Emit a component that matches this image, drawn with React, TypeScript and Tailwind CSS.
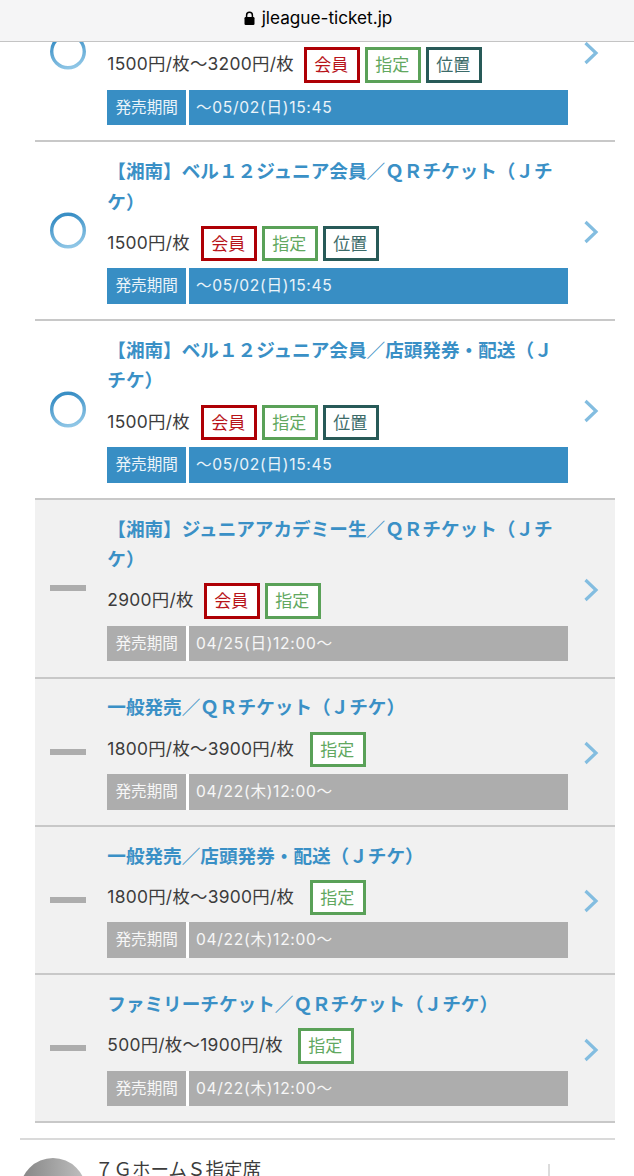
import clsx from "clsx";

interface Ticket {
    title?: string;
    price: string;
    priceWidth: string;
    tags: string[];
    period: string;
    onSale: boolean;
}

const tickets: Ticket[] = [
    {
        price: "1500円/枚〜3200円/枚",
        priceWidth: "w-[197px]",
        tags: ["会員", "指定", "位置"],
        period: "〜05/02(日)15:45",
        onSale: true,
    },
    {
        title: "【湘南】ベル１２ジュニア会員／ＱＲチケット（Ｊチケ）",
        price: "1500円/枚",
        priceWidth: "w-[94px]",
        tags: ["会員", "指定", "位置"],
        period: "〜05/02(日)15:45",
        onSale: true,
    },
    {
        title: "【湘南】ベル１２ジュニア会員／店頭発券・配送（Ｊチケ）",
        price: "1500円/枚",
        priceWidth: "w-[94px]",
        tags: ["会員", "指定", "位置"],
        period: "〜05/02(日)15:45",
        onSale: true,
    },
    {
        title: "【湘南】ジュニアアカデミー生／ＱＲチケット（Ｊチケ）",
        price: "2900円/枚",
        priceWidth: "w-[97px]",
        tags: ["会員", "指定"],
        period: "04/25(日)12:00〜",
        onSale: false,
    },
    {
        title: "一般発売／ＱＲチケット（Ｊチケ）",
        price: "1800円/枚〜3900円/枚",
        priceWidth: "w-[203px]",
        tags: ["指定"],
        period: "04/22(木)12:00〜",
        onSale: false,
    },
    {
        title: "一般発売／店頭発券・配送（Ｊチケ）",
        price: "1800円/枚〜3900円/枚",
        priceWidth: "w-[203px]",
        tags: ["指定"],
        period: "04/22(木)12:00〜",
        onSale: false,
    },
    {
        title: "ファミリーチケット／ＱＲチケット（Ｊチケ）",
        price: "500円/枚〜1900円/枚",
        priceWidth: "w-[191px]",
        tags: ["指定"],
        period: "04/22(木)12:00〜",
        onSale: false,
    },
];

const tagColors: Record<string, string> = {
    会員: "border-[#ae0005] text-[#b8141a]",
    指定: "border-[#5aa158] text-[#62a860]",
    位置: "border-[#285a58] text-[#3c6b69]",
};

const StatusIcon = ({ onSale }: { onSale: boolean }) => {
    if (!onSale) {
        return <div className="w-9 h-1.5 bg-[#adadad]"></div>;
    }

    return (
        <svg width="36" height="37" viewBox="0 0 36 37" fill="none">
            <defs>
                <linearGradient id="ring" x1="0.3" y1="0" x2="0.6" y2="1">
                    <stop offset="0.1" stopColor="#3a8fc5" />
                    <stop offset="1" stopColor="#8fc6e6" />
                </linearGradient>
            </defs>
            <circle cx="18" cy="18.5" r="16.3" stroke="url(#ring)" strokeWidth="3.4" />
        </svg>
    );
};

const TicketRow = ({ title, price, priceWidth, tags, period, onSale }: Ticket) => {
    const barColor = onSale ? "bg-[#388ec4]" : "bg-[#adadad]";

    return (
        <li className={clsx(
            "flex items-center border-t-2 border-[#c8c8c8] pl-[15px]",
            !onSale && "bg-[#f1f1f1]",
            !title && "h-[178.8px] -mt-[80.5px]",
        )}>
            <StatusIcon onSale={onSale} />

            <div className={clsx("w-[461px] ml-[21.3px] pt-[13.8px] pb-[15.2px]", !title && "self-end")}>
                {title && (
                    <h3 className="text-[18.62px] leading-[30.5px] font-bold text-[#3a90c6] break-all">
                        {title}
                    </h3>
                )}

                <div className="flex mt-[8.7px] h-[35.5px]">
                    <p className={clsx("shrink-0 text-[17.4px] tracking-[0.28px] leading-[33px] text-[#3c3c3c] whitespace-nowrap", priceWidth)}>
                        {price}
                    </p>
                    <div className="flex gap-[5px]">
                        {tags.map((tag) => (
                            <span
                                key={tag}
                                className={clsx("w-14 h-[35.5px] border-3 bg-white pl-[7px] text-[17px] leading-[30px]", tagColors[tag])}
                            >
                                {tag}
                            </span>
                        ))}
                    </div>
                </div>

                <div className="flex gap-[3px] mt-[7.1px] h-[35.5px] bg-white text-[15.6px] leading-[35px] text-white/90">
                    <span className={clsx("w-[78.7px] text-center", barColor)}>発売期間</span>
                    <span className={clsx("flex-1 pl-[7px] tracking-[0.7px]", barColor)}>{period}</span>
                </div>
            </div>

            <svg className="ml-4 mt-[3px]" width="15" height="24" viewBox="0 0 15 24" fill="none">
                <path d="M1.5 2L12 12L1.5 22" stroke="#83bde0" strokeWidth="3.2" />
            </svg>
        </li>
    );
};

const App = () => {
    return (
        <div className="w-[634px] h-[1176px] flex flex-col overflow-hidden bg-white font-['Inter','Noto_Sans_CJK_JP',sans-serif]" lang="ja">
            <header className="shrink-0 h-[42px] flex justify-center gap-[7px] pt-[7px] bg-[#f5f5f6] border-b border-[#c4c4c4]">
                <svg className="mt-1 ml-0.5" width="11" height="15" viewBox="0 0 11 15">
                    <rect x="0.5" y="6" width="10" height="8" rx="1.2" fill="#000" />
                    <path d="M2.6 7V4.2a2.9 2.9 0 0 1 5.8 0V7" fill="none" stroke="#000" strokeWidth="1.5" />
                </svg>
                <span className="text-[17.2px] leading-[22px] text-black">jleague-ticket.jp</span>
            </header>

            <div className="shrink-0 overflow-hidden">
                <ul className="ml-[35px] w-[579.5px] border-b-2 border-[#c8c8c8]">
                    {tickets.map((ticket, index) => (
                        <TicketRow key={index} {...ticket} />
                    ))}
                </ul>
            </div>

            <section className="shrink-0 flex ml-[19.5px] mt-[14.5px] w-[595px] border-t-2 border-[#dadada]">
                <div className="shrink-0 w-[66px] h-[66px] mt-[18px] ml-[0.5px] rounded-full bg-linear-to-r from-[#858585] to-[#c0c0c0]"></div>
                <h2 className="ml-[9px] mt-[14px] text-[18.5px] leading-[30px] text-[#3c3c3c]">７ＧホームＳ指定席</h2>
                <div className="w-0.5 h-12 mt-6 ml-auto mr-[65px] bg-[#dcdcdc]"></div>
            </section>
        </div>
    );
};

export default App;
